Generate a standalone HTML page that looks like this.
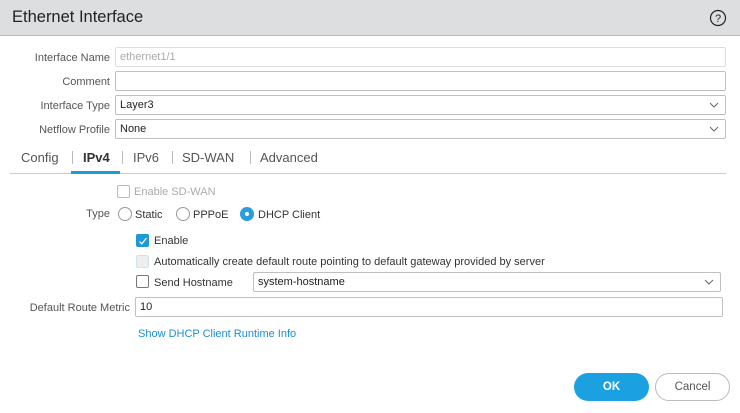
<!DOCTYPE html>
<html><head><style>
*{box-sizing:border-box;margin:0;padding:0}
body{width:740px;height:413px;background:#fff;font-family:"Liberation Sans",sans-serif;font-size:11px;color:#333;position:relative;overflow:hidden}
.a{position:absolute}
.hdr{left:0;top:0;width:740px;height:36px;background:#dddedf;border-bottom:1px solid #b9b9b9}
.lbl{position:absolute;text-align:right;color:#555;font-size:11px;line-height:14px;margin-top:1px}
.in{position:absolute;border:1px solid #bfbfbf;border-radius:2px;height:20px;padding-left:4px;line-height:19px;font-size:11px;color:#222;background:#fff}
.chev{position:absolute;right:6px;top:4px;width:10px;height:10px}
.cb{position:absolute;width:13px;height:13px;border:1px solid #777;border-radius:2px;background:#fff}
.rd{position:absolute;width:14px;height:14px;border:1px solid #999;border-radius:50%;background:#fff}
.t{position:absolute;line-height:14px;font-size:11px;color:#333;margin-top:1px}
.tab{position:absolute;top:150px;font-size:13px;color:#555;line-height:16px}
.sep{position:absolute;top:151px;width:1px;height:13px;background:#bbb}
</style></head><body>
<div class="a hdr"></div>
<div class="a" style="left:12px;top:8px;font-size:16.5px;color:#222">Ethernet Interface</div>
<svg class="a" style="left:709px;top:9px" width="18" height="18" viewBox="0 0 18 18"><circle cx="9" cy="9" r="7.5" fill="none" stroke="#222" stroke-width="1.2"/><text x="9" y="13" text-anchor="middle" font-size="11" font-family="Liberation Sans" fill="#222">?</text></svg>

<div class="lbl" style="right:630px;top:50px">Interface Name</div>
<div class="in" style="left:115px;top:47px;width:611px;border-color:#ddd;color:#aaa">ethernet1/1</div>
<div class="lbl" style="right:630px;top:74px">Comment</div>
<div class="in" style="left:115px;top:71px;width:611px"></div>
<div class="lbl" style="right:630px;top:98px">Interface Type</div>
<div class="in" style="left:115px;top:95px;width:611px">Layer3<svg class="chev" viewBox="0 0 10 10"><path d="M1 3l4 4 4-4" fill="none" stroke="#666"/></svg></div>
<div class="lbl" style="right:630px;top:122px">Netflow Profile</div>
<div class="in" style="left:115px;top:119px;width:611px">None<svg class="chev" viewBox="0 0 10 10"><path d="M1 3l4 4 4-4" fill="none" stroke="#666"/></svg></div>

<div class="tab" style="left:21px">Config</div>
<div class="sep" style="left:72px"></div>
<div class="tab" style="left:83px;font-weight:bold;color:#333">IPv4</div>
<div class="sep" style="left:122px"></div>
<div class="tab" style="left:133px">IPv6</div>
<div class="sep" style="left:172px"></div>
<div class="tab" style="left:182px">SD-WAN</div>
<div class="sep" style="left:250px"></div>
<div class="tab" style="left:260px">Advanced</div>
<div class="a" style="left:10px;top:173px;width:716px;height:1px;background:#ccc"></div>
<div class="a" style="left:71px;top:171px;width:49px;height:3px;background:#1a9ad6"></div>

<div class="cb" style="left:117px;top:185px;border-color:#bbb"></div>
<div class="t" style="left:134px;top:184px;color:#aaa">Enable SD-WAN</div>
<div class="lbl" style="right:630px;top:206px">Type</div>
<div class="rd" style="left:118px;top:207px"></div>
<div class="t" style="left:135px;top:207px">Static</div>
<div class="rd" style="left:176px;top:207px"></div>
<div class="t" style="left:193px;top:207px">PPPoE</div>
<div class="rd" style="left:240px;top:207px;background:#2a9ce0;border-color:#2a9ce0"><div class="a" style="left:4px;top:4px;width:4px;height:4px;border-radius:50%;background:#fff"></div></div>
<div class="t" style="left:258px;top:207px">DHCP Client</div>

<div class="cb" style="left:136px;top:234px;background:#1a9ad6;border-color:#1a9ad6"><svg class="a" style="left:1px;top:1px" width="10" height="10" viewBox="0 0 10 10"><path d="M1.5 5.5l2.3 2.3L8.5 2" fill="none" stroke="#fff" stroke-width="1.2"/></svg></div>
<div class="t" style="left:154px;top:233px">Enable</div>
<div class="cb" style="left:136px;top:255px;background:#eee;border-color:#cfe3ef"></div>
<div class="t" style="left:154px;top:254px">Automatically create default route pointing to default gateway provided by server</div>
<div class="cb" style="left:136px;top:275px"></div>
<div class="t" style="left:154px;top:275px">Send Hostname</div>
<div class="in" style="left:253px;top:272px;width:468px">system-hostname<svg class="chev" viewBox="0 0 10 10"><path d="M1 3l4 4 4-4" fill="none" stroke="#666"/></svg></div>
<div class="lbl" style="right:610px;top:300px">Default Route Metric</div>
<div class="in" style="left:135px;top:297px;width:588px">10</div>
<div class="t" style="left:138px;top:326px;color:#1a8fd0">Show DHCP Client Runtime Info</div>

<div class="a" style="left:574px;top:373px;width:75px;height:28px;border-radius:14px;background:#1ba1e2;color:#fff;font-weight:bold;text-align:center;line-height:29px;font-size:11.5px">OK</div>
<div class="a" style="left:655px;top:373px;width:75px;height:28px;border-radius:14px;border:1px solid #bbb;color:#555;text-align:center;line-height:27px;font-size:11.5px">Cancel</div>
</body></html>
